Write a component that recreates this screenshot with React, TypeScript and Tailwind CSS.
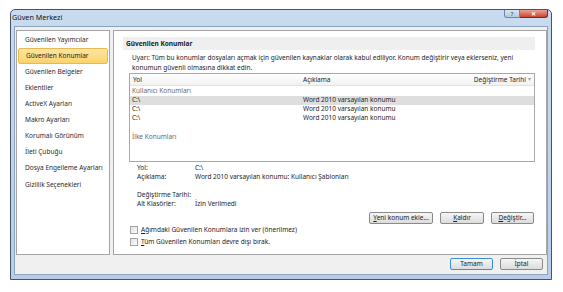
const font = { fontFamily: '"Noto Sans", "Open Sans", sans-serif' }

const navItems = [
  "Güvenilen Yayımcılar",
  "Güvenilen Konumlar",
  "Güvenilen Belgeler",
  "Eklentiler",
  "ActiveX Ayarları",
  "Makro Ayarları",
  "Korumalı Görünüm",
  "İleti Çubuğu",
  "Dosya Engelleme Ayarları",
  "Gizlilik Seçenekleri",
]

const rows = ["C:\\", "C:\\", "C:\\"]

function Btn({ label, u, w, focus }: { label: string; u?: boolean; w: string; focus?: boolean }) {
  return (
    <div
      className={`${w} h-[12px] shrink-0 rounded-[2px] border ${
        focus ? "border-[#3c8fd6]" : "border-[#8a8a8a]"
      } bg-gradient-to-b from-[#f6f6f6] to-[#dcdcdc] flex items-center justify-center text-[6.5px] leading-none text-[#1e1e1e] whitespace-nowrap`}
    >
      {u ? (
        <span>
          <span className="underline">{label[0]}</span>
          {label.slice(1)}
        </span>
      ) : (
        label
      )}
    </div>
  )
}

function Check({ first, rest }: { first: string; rest: string }) {
  return (
    <div className="flex items-center h-[12px] shrink-0">
      <div className="w-[8px] h-[8px] border border-[#a3a3a3] bg-gradient-to-br from-[#e2e2e2] to-[#fbfbfb]" />
      <span className="ml-[3px] text-[6.5px] text-[#1e1e1e] whitespace-nowrap">
        <span className="underline">{first}</span>
        {rest}
      </span>
    </div>
  )
}

export default function App() {
  return (
    <div className="w-[563px] h-[292px] bg-white pl-[10px] pt-[9px]" style={font}>
      <div className="w-[542px] h-[271px] border border-[#44556b] rounded-t-[5px] bg-gradient-to-b from-[#c9dbef] to-[#b7cde8] flex flex-col">
        {/* title bar */}
        <div className="h-[16px] shrink-0 flex items-start">
          <span className="ml-[1px] mt-[2px] text-[7.2px] leading-[10px] text-[#111]">Güven Merkezi</span>
          <div className="ml-auto mr-[3px] flex">
            <div className="w-[16px] h-[8px] rounded-bl-[3px] border border-t-0 border-[#6f87a5] bg-gradient-to-b from-[#d7e3f1] to-[#b9cbe2] flex items-center justify-center text-[6px] leading-none text-[#333]">
              ?
            </div>
            <div className="w-[28px] h-[8px] rounded-br-[3px] border border-t-0 border-l-0 border-[#7a2a22] bg-gradient-to-b from-[#e8a293] to-[#c8432f] flex items-center justify-center text-[6px] leading-none text-white font-bold">
              ✕
            </div>
          </div>
        </div>

        {/* body */}
        <div className="flex-1 mx-[3px] mb-[4px] border border-[#8ea3bd] bg-[#f0f0f0] flex flex-col">
          <div className="flex pt-[3px] pl-[1px] shrink-0">
            {/* left nav */}
            <div className="w-[94px] h-[225px] shrink-0 bg-white border border-[#a6a6a6] pt-[1px] flex flex-col">
              {navItems.map((n, i) => (
                <div
                  key={n}
                  className={`mx-[1px] h-[16px] shrink-0 flex items-center pl-[7px] text-[6.5px] leading-none whitespace-nowrap ${
                    i === 1
                      ? "bg-gradient-to-b from-[#fde6a3] to-[#fbd36a] border border-[#e8b94e] rounded-[2px] text-[#1e1e1e]"
                      : "text-[#2b2b2b]"
                  } ${i === 9 ? "mt-[1px]" : ""}`}
                >
                  {n}
                </div>
              ))}
            </div>

            {/* right panel */}
            <div className="ml-[3px] w-[434px] h-[225px] shrink-0 bg-white border border-[#a6a6a6] flex flex-col">
              <div className="shrink-0 mt-[6px] ml-[9px] w-[412px] h-[13px] bg-[#efefef] flex items-center pl-[3px] text-[6.5px] font-bold text-[#222]">
                Güvenilen Konumlar
              </div>

              <div className="shrink-0 ml-[18px] mt-[3px] w-[400px] text-[6.5px] leading-[10px] text-[#1e1e1e]">
                Uyarı: Tüm bu konumlar dosyaları açmak için güvenilen kaynaklar olarak kabul ediliyor. Konum değiştirir veya eklerseniz, yeni konumun güvenli olmasına dikkat edin.
              </div>

              {/* table */}
              <div className="shrink-0 ml-[15px] w-[406px] h-[89px] border border-[#a8a8a8] flex flex-col text-[6.5px] text-[#1e1e1e]">
                <div className="h-[12px] shrink-0 flex items-center bg-gradient-to-b from-white to-[#f1f1f1] border-b border-[#e2e2e2]">
                  <span className="pl-[3px] w-[173px]">Yol</span>
                  <span className="flex-1">Açıklama</span>
                  <span className="pr-[2px]">Değiştirme Tarihi</span>
                  <span className="pr-[3px] text-[6px] text-[#a0a0a0]">▾</span>
                </div>
                <div className="h-[9px] shrink-0 mt-[1px] flex items-center pl-[2px] text-[#6b6b6b] leading-none">
                  Kullanıcı Konumları
                </div>
                {rows.map((r, i) => (
                  <div
                    key={i}
                    className={`h-[9px] shrink-0 flex items-center leading-none ${i === 0 ? "bg-[#dedede]" : ""}`}
                  >
                    <span className="pl-[2px] w-[173px]">{r}</span>
                    <span>Word 2010 varsayılan konumu</span>
                  </div>
                ))}
                <div className="h-[9px] shrink-0 mt-[10px] flex items-center pl-[2px] text-[#6b6b6b] leading-none">
                  İlke Konumları
                </div>
              </div>

              {/* details */}
              <div className="shrink-0 ml-[23px] mt-[1px] text-[6.5px] leading-[9px] text-[#1e1e1e] whitespace-nowrap">
                <div className="flex"><span className="w-[58px]">Yol:</span><span>C:\</span></div>
                <div className="flex"><span className="w-[58px]">Açıklama:</span><span>Word 2010 varsayılan konumu: Kullanıcı Şablonları</span></div>
                <div className="h-[9px]" />
                <div className="flex"><span className="w-[58px]">Değiştirme Tarihi:</span><span></span></div>
                <div className="flex"><span className="w-[58px]">Alt Klasörler:</span><span>İzin Verilmedi</span></div>
              </div>

              <div className="shrink-0 flex justify-end gap-[7px] mr-[12px] mt-[4px]">
                <Btn label="Yeni konum ekle..." u w="w-[64px]" />
                <Btn label="Kaldır" u w="w-[44px]" />
                <Btn label="Değiştir..." u w="w-[43px]" />
              </div>

              <div className="shrink-0 ml-[16px] flex flex-col">
                <Check first="A" rest="ğımdaki Güvenilen Konumlara izin ver (önerilmez)" />
                <Check first="T" rest="üm Güvenilen Konumları devre dışı bırak." />
              </div>
            </div>
          </div>

          {/* bottom buttons */}
          <div className="shrink-0 flex justify-end gap-[7px] mr-[4px] mt-[3px]">
            <Btn label="Tamam" w="w-[43px]" focus />
            <Btn label="İptal" w="w-[43px]" />
          </div>
        </div>
      </div>
    </div>
  )
}
